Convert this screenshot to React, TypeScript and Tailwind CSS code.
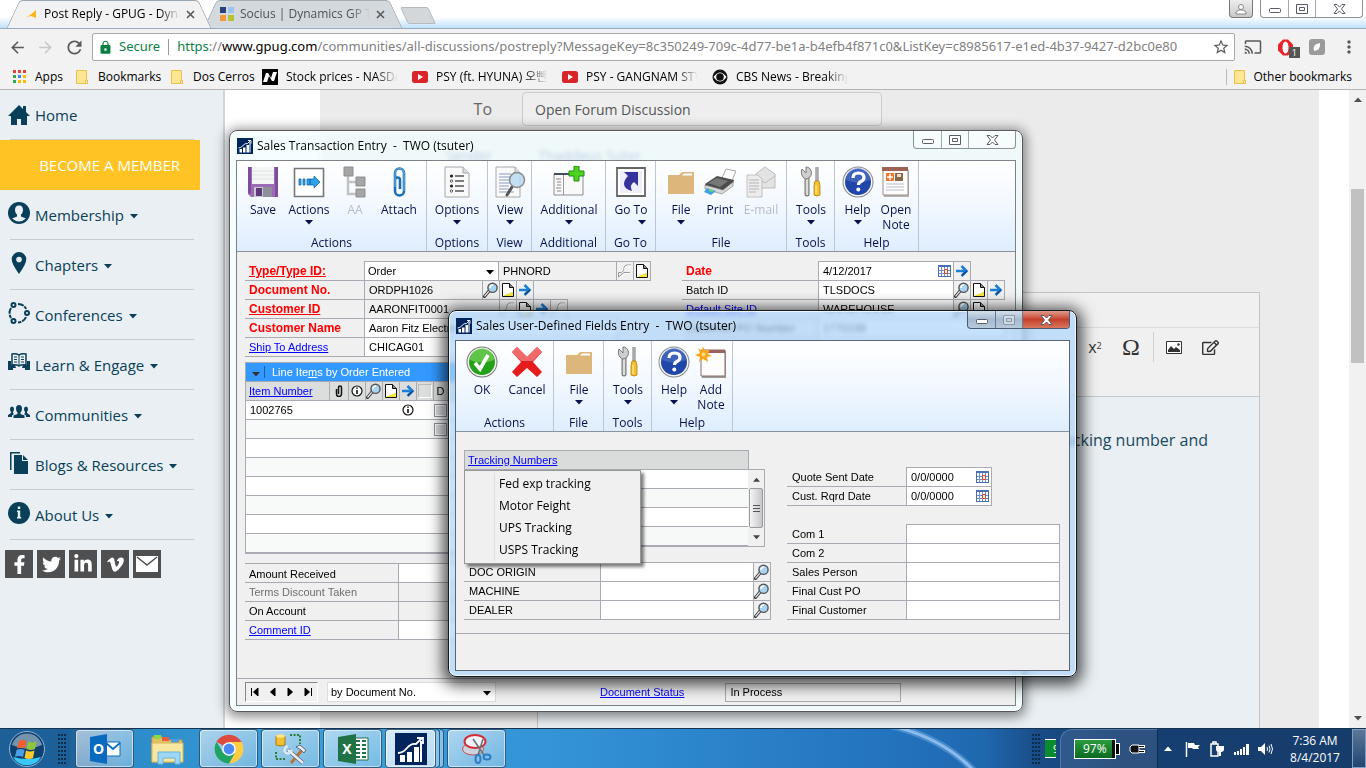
import React from 'react';
import clsx from 'clsx';
import { FaFacebookF, FaTwitter, FaLinkedinIn, FaVimeoV, FaRegEdit } from 'react-icons/fa';
import { MdCast, MdMoreVert, MdArrowBack, MdArrowForward, MdRefresh, MdLock, MdStarBorder } from 'react-icons/md';

type IconProps = { className?: string };
type Children = { children?: React.ReactNode };

/* ---------- small form icons ---------- */

const Magnifier = ({ className = '' }: IconProps) => (
  <svg viewBox="0 0 16 16" className={clsx('h-4 w-4', className)}>
    <path d="M6 9 1.5 14.5" stroke="#333" strokeWidth="3" strokeLinecap="round" />
    <path d="M6 9 1.8 14" stroke="#e8e8e8" strokeWidth="1.2" strokeLinecap="round" />
    <circle cx="9.5" cy="5.8" r="4.6" fill="#a8d4f4" stroke="#555" strokeWidth="1.4" />
    <path d="M7 6a3 3 0 0 1 3-3" stroke="#fff" strokeWidth="1.6" fill="none" />
  </svg>
);

const FadedMagnifier = () => (
  <svg viewBox="0 0 16 16" className="h-4 w-4">
    <path d="M1.500 14V9.500h3L7 7V4l2-2h5M1.500 14 7 9.500h6" stroke="#9a9a9a" fill="none" />
    <path d="M2.500 15 8 10.500h5M8 7V5l2-2h4" stroke="#fff" fill="none" />
  </svg>
);

const PageIcon = () => (
  <svg viewBox="0 0 16 16" className="h-4 w-4">
    <path d="M2.500 1.500h7l4 4v9h-11z" fill="#fff" stroke="#111" />
    <path d="M9.500 1.500v4h4" fill="#888" stroke="#111" />
    <path d="M4 13.500h9M6 12.500h7M9 11.500h4M11 10.500h2" stroke="#f2e540" />
  </svg>
);

const ArrowIcon = () => (
  <svg viewBox="0 0 16 16" className="h-4 w-4">
    <path d="M2 8h10M7.500 3l5 5-5 5" stroke="#1b7fd4" strokeWidth="2.600" fill="none" />
    <path d="M8 12.500 13 8" stroke="#123f7c" strokeWidth="1.200" />
  </svg>
);

const CalendarIcon = () => (
  <svg viewBox="0 0 13 12" className="h-3 w-[13px]">
    <path d="M0 0h13v12H0z" fill="#4a6fb5" />
    <path d="M1 2h11v9H1z" fill="#fff" />
    <path d="M1 5.500h11M1 8.500h11M3.500 2v9M6.500 2v9M9.500 2v9" stroke="#6f8fc8" />
    <path d="M6.500 4.500h3v4h-3z" fill="#fff" stroke="#e0452a" />
  </svg>
);

const InfoIcon = () => (
  <svg viewBox="0 0 12 12" className="h-3 w-3">
    <circle cx="6" cy="6" r="5" fill="#fff" stroke="#111" strokeWidth="1.200" />
    <path d="M6 5v4M6 2.500v1.300" stroke="#111" strokeWidth="1.600" />
  </svg>
);

const ClipIcon = () => (
  <svg viewBox="0 0 8 12" className="h-3 w-2">
    <path d="M1.500 4v5a2.500 2.500 0 0 0 5 0V2.500a1.500 1.500 0 0 0-3 0V9" fill="none" stroke="#111" strokeWidth="1.500" />
  </svg>
);

const GpLogo = ({ className = '' }: IconProps) => (
  <svg viewBox="0 0 32 32" className={className}>
    <path d="M0 0h32v32H0z" fill="#02245c" />
    <path d="M5 29h5v-7H5zM12 29h5V19h-5zM19 29h5V14h-5zM25 29h2V8h-2z" fill="#fff" />
    <path d="M3 20q5 0 9-5t9-4l6-6" fill="none" stroke="#fff" strokeWidth="1.800" />
    <path d="M22 5h6v6" fill="none" stroke="#fff" strokeWidth="1.800" />
  </svg>
);

/* ---------- ribbon icons, all on a 32 grid ---------- */

const Svg32 = ({ children }: Children) => (
  <svg viewBox="0 0 32 32" className="h-8 w-8">{children}</svg>
);

const SaveIcon = () => (
  <Svg32>
    <path d="M1 1h30v30H4l-3-3z" fill="#9b6bb8" />
    <path d="M1 1h3v27l-3-1zM28 1h3v30h-3z" fill="#7d4c9b" />
    <path d="M5 1h22v17H5z" fill="#f4f6f6" />
    <path d="M5 5h22M5 9h22M5 13h22" stroke="#dde5e3" />
    <path d="M7 21h18v10H7z" fill="#c9c9cf" />
    <path d="M9 22h6v8H9z" fill="#5c3a78" />
    <path d="M16 21h9v10h-9z" fill="#90909c" />
  </Svg32>
);

const ActionsIcon = () => (
  <Svg32>
    <path d="M1.500 2.500h29v28h-29z" fill="#fff" stroke="#777" strokeWidth="1.600" />
    <path d="M6 13h2v6H6zM10 13h2v6h-2zM14 13h3v6h-3zM17 13h4v-3l6 6-6 6v-3h-4z" fill="#2ea3ea" stroke="#1467ad" strokeWidth=".8" />
  </Svg32>
);

const TreeIcon = () => (
  <Svg32>
    <path d="M9 9v19h11M9 16h11" fill="none" stroke="#c2c2c2" strokeWidth="2.500" />
    <path d="M5 1h9v9H5zM17 11h9v9h-9zM17 23h9v8h-9z" fill="#a5a5a5" stroke="#8d8d8d" />
  </Svg32>
);

const AttachIcon = () => (
  <Svg32>
    <path d="M12 21V7a4.500 4.500 0 0 1 9 0v18a4.500 4.500 0 0 1-9 0V14a2.500 2.500 0 0 1 5 0v9" fill="none" stroke="#1c6fb4" strokeWidth="2.600" />
    <path d="M12 21V7a4.500 4.500 0 0 1 9 0v18" fill="none" stroke="#6fb9ee" strokeWidth="1" />
  </Svg32>
);

const OptionsIcon = () => (
  <Svg32>
    <path d="M4 1h18l6 6v24H4z" fill="#f9f9f9" stroke="#a8a8a8" />
    <path d="M22 1v6h6" fill="#ddd" stroke="#a8a8a8" />
    <path d="M14 10h9M14 15h9M14 20h9M14 25h9" stroke="#555" strokeWidth="1.300" />
    <circle cx="10.500" cy="10" r="1.600" fill="#222" /><circle cx="10.500" cy="20" r="1.600" fill="#222" />
    <circle cx="10.500" cy="15" r="1.200" fill="#fff" stroke="#555" /><circle cx="10.500" cy="25" r="1.200" fill="#fff" stroke="#555" />
  </Svg32>
);

const ViewIcon = () => (
  <Svg32>
    <path d="M2 1h19l5 6v24H2z" fill="#fafafa" stroke="#a8a8a8" />
    <path d="M21 1v6h5" fill="#ddd" stroke="#a8a8a8" />
    <path d="M5 8h12M5 11h12M5 14h12M5 17h11M5 20h10M5 23h10M5 26h15" stroke="#8b9bc4" />
    <path d="m18 21-5 8" stroke="#555" strokeWidth="3" strokeLinecap="round" />
    <circle cx="23" cy="14" r="7.500" fill="#b7d9f2" fillOpacity=".85" stroke="#8b8b8b" strokeWidth="1.500" />
  </Svg32>
);

const AdditionalIcon = () => (
  <Svg32>
    <path d="M1 8h29v21H1z" fill="#f8f8f8" stroke="#8d8d8d" />
    <path d="M1 7h20v2H1z" fill="#444e63" />
    <path d="M10.500 9v20" stroke="#999" />
    <path d="M3 13h5M4 16h4M4 19h4M3 22h5M4 25h4" stroke="#888" />
    <path d="M21 0h5v5h5v5h-5v5h-5v-5h-5V5h5z" fill="#4cd41f" stroke="#1f8a10" />
  </Svg32>
);

const GoToIcon = () => (
  <Svg32>
    <path d="M2 2h28v28H2z" fill="#fff" stroke="#666" strokeWidth="1.800" />
    <path d="M5 5h22v22H5z" fill="#eeeefb" />
    <path d="M9 6h14v14l-4-4q-5 3-2 9-8-2-8-7 0-4 4-8z" fill="#35339b" />
  </Svg32>
);

const FolderIcon = () => (
  <Svg32>
    <path d="M3 9h11l3-3h12v22H3z" fill="#dcb67a" />
    <path d="M17 9.500 19 7.500h8v2z" fill="#fff" />
  </Svg32>
);

const PrintIcon = () => (
  <Svg32>
    <path d="M17 14 22 3l10 2-5 12z" fill="#fff" stroke="#aaa" />
    <path d="m1 18 12-8 17 4-1 4-10 8L2 21z" fill="#4c4c4c" />
    <path d="m4 17 9-5 11 3-8 6z" fill="#777" />
    <path d="M1 19v4l17 5 11-8v-4l-10 8z" fill="#d9d9d9" stroke="#777" strokeWidth=".6" />
    <path d="m3 22 9 3-5 4-7-3z" fill="#3da4dd" />
    <path d="m5 24 4 1" stroke="#7fd06c" strokeWidth="2" />
  </Svg32>
);

const EmailIcon = () => (
  <Svg32>
    <path d="M11 8 20 1l10 7v14H11z" fill="#e3e3e3" stroke="#bbb" />
    <path d="m11 10 9 7 10-7" fill="none" stroke="#bbb" />
    <path d="M2 9h11l4 4v18H2z" fill="#ececec" stroke="#c0c0c0" />
    <path d="M4 14h10M4 17h10M4 20h10M4 23h10M4 26h7" stroke="#b5b5b5" />
  </Svg32>
);

const ToolsIcon = () => (
  <Svg32>
    <path d="M12 13v15" stroke="#777" strokeWidth="5" strokeLinecap="round" />
    <path d="M12 13v15" stroke="#dcdcdc" strokeWidth="2.600" strokeLinecap="round" />
    <path d="M7 3 11 7V1c5 0 7 6 4 10l-3 2C8 13 5 8 7 3z" fill="#cfcfcf" stroke="#777" />
    <path d="M22 1v14" stroke="#777" strokeWidth="3" />
    <path d="M22 1v14" stroke="#ddd" />
    <path d="M20 15h4l1 5v9q-3 2-6 0v-9z" fill="#f7c12c" stroke="#b87a08" strokeWidth=".8" />
    <path d="M21 19v9" stroke="#fff2b0" />
  </Svg32>
);

const HelpIcon = () => (
  <Svg32>
    <circle cx="16" cy="16" r="15.500" fill="#8a8a8a" />
    <circle cx="16" cy="16" r="14.500" fill="#f5f5f5" />
    <circle cx="16" cy="16" r="13" fill="#1f46a8" />
    <path d="M4 14a12 12 0 0 1 24 0q-12 5-24 0z" fill="#5577cc" opacity=".6" />
    <path d="M11 12q0-5 5.500-5t5.500 4.500q0 2.500-3 4-2.500 1-2.500 3.500" fill="none" stroke="#fff" strokeWidth="3.200" />
    <circle cx="16.300" cy="23.500" r="2" fill="#fff" />
  </Svg32>
);

const OpenNoteIcon = () => (
  <Svg32>
    <path d="M4 5h25v26H4z" fill="#b5b5b5" />
    <path d="M3 3h25v26H3z" fill="#fdfdfd" stroke="#9a8c88" />
    <path d="M2 1h26v4H2z" fill="#9c6252" />
    <path d="M6 7h8v8H6z" fill="#f0772b" />
    <path d="M10 8v6M7 11h6" stroke="#fff" strokeWidth="1.600" />
    <path d="M15 7h8v8h-8z" fill="#8a6747" />
    <path d="M17 8h4v3h-4z" fill="#f4e0c6" />
    <path d="M6 18h18M6 21h18M6 24h18" stroke="#b8bccb" />
  </Svg32>
);

const OkIcon = () => (
  <Svg32>
    <circle cx="16" cy="16" r="15.500" fill="#777" />
    <circle cx="16" cy="16" r="14.500" fill="#f4f4f4" />
    <circle cx="16" cy="16" r="13" fill="#22a016" />
    <path d="M4 14a12 12 0 0 1 24 0q-12 5-24 0z" fill="#8bdc6c" opacity=".6" />
    <path d="m9 17 5 6 8-14" fill="none" stroke="#fff" strokeWidth="3.600" />
  </Svg32>
);

const CancelIcon = () => (
  <Svg32>
    <path d="m6 1 10 10L26 1l5 5-9 10 9 10-5 5-10-9-10 9-5-5 9-10L1 6z" fill="#e51c1c" />
    <path d="m6 1 10 10L26 1l5 5-9 9H10L1 6z" fill="#f06a6a" />
  </Svg32>
);

const AddNoteIcon = () => (
  <Svg32>
    <path d="M7 5h24v27H7z" fill="#9b9b9b" />
    <path d="M6 4h24v26H6z" fill="#fdfdfd" stroke="#8a6a66" />
    <path d="M12 4h18v3H12z" fill="#9c6262" />
    <path d="m8 0 2 5 5-2-2 5 4 2-5 1 1 5-5-3-4 3 1-5-5-2 5-2-2-5 4 3z" fill="#f9a51a" />
    <circle cx="8.500" cy="8.500" r="2" fill="#ffe17a" />
  </Svg32>
);

/* ---------- window chrome ---------- */

function WindowControls({ dark = false, className = '' }: { dark?: boolean; className?: string }) {
  const base = 'flex items-center justify-center h-full';
  return (
    <div
      className={clsx(
        'flex h-[18px] w-[103px] overflow-hidden rounded-b border border-t-0',
        dark ? 'border-[#4a5a70] bg-linear-to-b from-[#d5e0ec] via-[#a5bace] to-[#b8cadc]' : 'border-[#8a9296] bg-white/40',
        className,
      )}
    >
      <button aria-label="Minimize" className={clsx(base, 'w-7 border-r', dark ? 'border-[#6a7a90]' : 'border-[#a3abaf]')}>
        <svg viewBox="0 0 12 5" className="mt-1 h-[5px] w-3"><rect x=".5" y=".5" width="11" height="4" rx="1" fill="#fff" stroke="#585c66" /></svg>
      </button>
      <button aria-label="Restore" className={clsx(base, 'w-[27px] border-r', dark ? 'border-[#6a7a90]' : 'border-[#a3abaf]')}>
        <svg viewBox="0 0 12 10" className={clsx('h-[10px] w-3', dark && 'opacity-40')}>
          <path d="M.5.5h11v9H.5z" fill="#fff" stroke="#585c66" />
          <path d="M3.500 3.500h5v3h-5z" fill="#fff" stroke="#585c66" />
        </svg>
      </button>
      <button
        aria-label="Close"
        className={clsx(base, 'flex-1', dark && 'bg-linear-to-b from-[#e09a8c] via-[#c4402a] to-[#d8765c]')}
      >
        <svg viewBox="0 0 13 10" className="h-[10px] w-[13px]">
          <path d="M1 .5h3l2.500 2.500L9 .5h3L8.500 5 12 9.500H9L6.500 7 4 9.500H1L4.500 5z" fill="#fff" stroke="#585c66" />
        </svg>
      </button>
    </div>
  );
}

type RibbonItem = { label: string; icon: React.FC; width: string; menu?: boolean; menuRight?: boolean; disabled?: boolean };
type RibbonGroupData = { caption: string; className: string; items: RibbonItem[] };

const DownTriangle = ({ className = '' }: IconProps) => (
  <svg viewBox="0 0 8 5" className={clsx('h-[5px] w-2', className)}><path d="M0 0h8L4 4.500z" fill="currentColor" /></svg>
);

function Ribbon({ groups }: { groups: RibbonGroupData[] }) {
  return (
    <div className="flex h-[91px] border-b border-[#8d939c] bg-linear-to-b from-white via-[#f2f8ff] to-[#deedfd] text-xs text-[#07104e]">
      {groups.map((group) => (
        <div key={group.caption} className={clsx('flex flex-none flex-col justify-between border-r border-[#bcc6d2]', group.className)}>
          <div className="flex px-[3px] pt-[5px]">
            {group.items.map((item) => (
              <button
                key={item.label}
                disabled={item.disabled}
                className={clsx('flex flex-none flex-col items-center', item.width, item.disabled && 'text-[#b9bcc2]')}
              >
                <item.icon />
                <span className="mt-1 text-center leading-[15px]">{item.label}</span>
                {item.menu && <DownTriangle className={clsx('mt-[3px]', item.menuRight && 'mr-[7px] self-end')} />}
              </button>
            ))}
          </div>
          <div className="pb-px text-center leading-[15px]">{group.caption}</div>
        </div>
      ))}
    </div>
  );
}

const mainRibbon: RibbonGroupData[] = [
  {
    caption: 'Actions',
    className: 'w-[190px]',
    items: [
      { label: 'Save', icon: SaveIcon, width: 'w-[46px]' },
      { label: 'Actions', icon: ActionsIcon, width: 'w-[46px]', menu: true },
      { label: 'AA', icon: TreeIcon, width: 'w-[46px]', disabled: true },
      { label: 'Attach', icon: AttachIcon, width: 'w-[42px]' },
    ],
  },
  { caption: 'Options', className: 'w-[61px]', items: [{ label: 'Options', icon: OptionsIcon, width: 'w-[54px]', menu: true }] },
  { caption: 'View', className: 'w-11', items: [{ label: 'View', icon: ViewIcon, width: 'w-[38px]', menu: true }] },
  { caption: 'Additional', className: 'w-[74px]', items: [{ label: 'Additional', icon: AdditionalIcon, width: 'w-[68px]', menu: true }] },
  { caption: 'Go To', className: 'w-[50px]', items: [{ label: 'Go To', icon: GoToIcon, width: 'w-[44px]', menu: true, menuRight: true }] },
  {
    caption: 'File',
    className: 'w-[131px]',
    items: [
      { label: 'File', icon: FolderIcon, width: 'w-11', menu: true },
      { label: 'Print', icon: PrintIcon, width: 'w-[34px]' },
      { label: 'E-mail', icon: EmailIcon, width: 'w-12', disabled: true },
    ],
  },
  { caption: 'Tools', className: 'w-12', items: [{ label: 'Tools', icon: ToolsIcon, width: 'w-[42px]', menu: true }] },
  {
    caption: 'Help',
    className: 'w-[84px]',
    items: [
      { label: 'Help', icon: HelpIcon, width: 'w-[39px]', menu: true },
      { label: 'Open Note', icon: OpenNoteIcon, width: 'w-[38px]' },
    ],
  },
];

const dialogRibbon: RibbonGroupData[] = [
  {
    caption: 'Actions',
    className: 'w-[98px]',
    items: [
      { label: 'OK', icon: OkIcon, width: 'w-[46px]' },
      { label: 'Cancel', icon: CancelIcon, width: 'w-[44px]' },
    ],
  },
  { caption: 'File', className: 'w-[50px]', items: [{ label: 'File', icon: FolderIcon, width: 'w-[44px]', menu: true }] },
  { caption: 'Tools', className: 'w-12', items: [{ label: 'Tools', icon: ToolsIcon, width: 'w-[42px]', menu: true }] },
  {
    caption: 'Help',
    className: 'w-[81px]',
    items: [
      { label: 'Help', icon: HelpIcon, width: 'w-[38px]', menu: true },
      { label: 'Add Note', icon: AddNoteIcon, width: 'w-[36px]' },
    ],
  },
];

/* ---------- form pieces ---------- */

// Cells overlap by one pixel so that neighbours share a single border line.
const cell = 'h-5 flex-none border border-[#a9aab2]';

function FieldRow({ id, label, labelClass, children }: Children & { id: string; label: string; labelClass: string }) {
  return (
    <div className="-mt-px flex">
      <label htmlFor={id} className={clsx('h-5 flex-none truncate border-b border-[#a9aab2] pl-1 leading-[21px]', labelClass)}>{label}</label>
      {children}
    </div>
  );
}

function TextCell({ id, value = '', className }: { id: string; value?: string; className: string }) {
  return <input id={id} defaultValue={value} className={clsx(cell, 'min-w-0 px-1 text-black outline-none', className)} />;
}

function IconCell({ label, children }: Children & { label: string }) {
  return (
    <button aria-label={label} className={clsx(cell, '-ml-px flex w-[18px] items-center justify-center')}>{children}</button>
  );
}

function DateCell({ id, value, className }: { id: string; value: string; className: string }) {
  return (
    <div className={clsx(cell, 'flex items-center bg-white pr-[2px]', className)}>
      <input id={id} defaultValue={value} className="min-w-0 flex-1 px-1 outline-none" />
      <button aria-label={`Pick date for ${id}`}><CalendarIcon /></button>
    </div>
  );
}

const required = 'w-[119px] text-xs font-bold text-[#f00]';
const linkText = 'text-[#00f] underline';

function SalesTransactionWindow() {
  return (
    <section className="absolute left-[229px] top-[130px] w-[794px] rounded-lg border border-[#55595c] bg-[#f1fefe]/75 px-[6px] pb-[5px] shadow-[0_2px_12px_3px_rgba(0,0,0,0.45),inset_0_0_0_1px_#fff] backdrop-blur-[2px]">
      <header className="flex h-[29px] items-center gap-1 pl-px text-xs">
        <GpLogo className="h-4 w-4" />
        <h2 className="whitespace-pre">Sales Transaction Entry  -  TWO (tsuter)</h2>
        <WindowControls className="ml-auto self-start" />
      </header>
      <div className="border border-[#7b8086] bg-[#f0f0f0] font-[Liberation_Sans,Arial,sans-serif] text-[11px]">
        <div className="font-[Open_Sans,sans-serif]"><Ribbon groups={mainRibbon} /></div>
        <div className="flex pl-2 pt-[10px]">
          <div className="w-[437px] flex-none">
            <FieldRow id="type" label="Type/Type ID:" labelClass={clsx(required, 'underline')}>
              <div className={clsx(cell, 'relative w-[135px] bg-white')}>
                <select id="type" className="h-full w-full appearance-none px-[3px] outline-none"><option>Order</option></select>
                <DownTriangle className="pointer-events-none absolute right-1 top-2" />
              </div>
              <TextCell id="type-id" value="PHNORD" className="-ml-px w-[119px]" />
              <IconCell label="Look up type"><FadedMagnifier /></IconCell>
              <IconCell label="Type note"><PageIcon /></IconCell>
            </FieldRow>
            <FieldRow id="document-no" label="Document No." labelClass={required}>
              <TextCell id="document-no" value="ORDPH1026" className="w-[119px]" />
              <IconCell label="Look up document"><Magnifier /></IconCell>
              <IconCell label="Document note"><PageIcon /></IconCell>
              <IconCell label="Open document"><ArrowIcon /></IconCell>
            </FieldRow>
            <FieldRow id="customer-id" label="Customer ID" labelClass={clsx(required, 'underline')}>
              <TextCell id="customer-id" value="AARONFIT0001" className="w-[136px]" />
              <IconCell label="Look up customer"><FadedMagnifier /></IconCell>
              <IconCell label="Customer note"><PageIcon /></IconCell>
              <IconCell label="Open customer"><ArrowIcon /></IconCell>
              <IconCell label="Customer credit"><FadedMagnifier /></IconCell>
            </FieldRow>
            <FieldRow id="customer-name" label="Customer Name" labelClass={required}>
              <TextCell id="customer-name" value="Aaron Fitz Electrical" className="w-[254px] bg-white" />
            </FieldRow>
            <FieldRow id="ship-to" label="Ship To Address" labelClass={clsx('w-[119px]', linkText)}>
              <TextCell id="ship-to" value="CHICAG01" className="w-[254px] bg-white" />
            </FieldRow>
          </div>
          <div>
            <FieldRow id="date" label="Date" labelClass="w-[136px] text-xs font-bold text-[#f00]">
              <DateCell id="date" value="4/12/2017" className="w-[136px]" />
              <IconCell label="Expand date"><ArrowIcon /></IconCell>
            </FieldRow>
            <FieldRow id="batch" label="Batch ID" labelClass="w-[136px]">
              <TextCell id="batch" value="TLSDOCS" className="w-[136px] bg-white" />
              <IconCell label="Look up batch"><Magnifier /></IconCell>
              <IconCell label="Batch note"><PageIcon /></IconCell>
              <IconCell label="Open batch"><ArrowIcon /></IconCell>
            </FieldRow>
            <FieldRow id="site" label="Default Site ID" labelClass={clsx('w-[136px]', linkText)}>
              <TextCell id="site" value="WAREHOUSE" className="w-[136px] bg-white" />
              <IconCell label="Look up site"><Magnifier /></IconCell>
              <IconCell label="Site note"><PageIcon /></IconCell>
            </FieldRow>
            <FieldRow id="po" label="Customer PO Number" labelClass="w-[136px]">
              <TextCell id="po" value="1770198" className="w-[187px] bg-white" />
            </FieldRow>
          </div>
        </div>

        <div className="mx-2 mt-[5px] border border-[#a9aab2]">
          <div className="flex h-[18px] items-center bg-[#3399ff] text-white">
            <DownTriangle className="ml-[6px] mt-1 text-[#333]" />
            <span className="ml-1 h-3 border-l border-[#1c5fa8] pl-[7px] leading-[13px]">Line Ite<u>m</u>s by Order Entered</span>
          </div>
          <table className="w-full table-fixed border-collapse">
            <thead>
              <tr className="h-[19px] bg-[#dcdddd] [&>th]:border-y [&>th]:border-r [&>th]:border-[#a9aab2] [&>th]:p-0 [&>th]:font-normal">
                <th className="w-[83px] text-left"><a href="#item" className={clsx('pl-[3px]', linkText)}>Item Number</a></th>
                <th className="w-[19px]"><span className="flex justify-center"><ClipIcon /></span></th>
                <th className="w-[17px]"><span className="flex justify-center"><InfoIcon /></span></th>
                <th className="w-[17px]"><span className="flex justify-center"><Magnifier /></span></th>
                <th className="w-[17px]"><span className="flex justify-center"><PageIcon /></span></th>
                <th className="w-[17px]"><span className="flex justify-center"><ArrowIcon /></span></th>
                <th className="w-[17px]"><span className="mx-auto block h-[14px] w-[14px] border border-b-white border-l-[#bbb] border-r-white border-t-[#bbb]" /></th>
                <th className="text-left"><span className="pl-[3px]">D</span></th>
              </tr>
            </thead>
            <tbody>
              {['1002765', '', '', '', '', '', '', ''].map((item, i) => (
                <tr key={i} className={clsx('h-[19px] border-b border-[#a9aab2]', i % 2 ? 'bg-[#f8fafa]' : 'bg-white')}>
                  <td className="p-0 pl-1">{item}</td>
                  <td colSpan={4} className="p-0" />
                  <td className="p-0">{item && <span className="flex justify-center"><InfoIcon /></span>}</td>
                  <td className="p-0" />
                  <td className="p-0">
                    {i < 2 && (
                      <input
                        type="checkbox"
                        aria-label={`Drop ship line ${i + 1}`}
                        className="ml-px block h-[13px] w-[13px] appearance-none border border-[#8f9295] bg-[#dcdfe2] shadow-[inset_0_0_0_1px_#fff]"
                      />
                    )}
                  </td>
                </tr>
              ))}
            </tbody>
          </table>
        </div>

        <div className="px-2 pt-[10px]">
          <FieldRow id="amount" label="Amount Received" labelClass="w-[153px] border-t">
            <TextCell id="amount" className="w-[120px] bg-white" />
          </FieldRow>
          <FieldRow id="terms" label="Terms Discount Taken" labelClass="w-[153px] text-[#6f6f6f]">
            <TextCell id="terms" className="w-[120px]" />
          </FieldRow>
          <FieldRow id="account" label="On Account" labelClass="w-[153px]">
            <TextCell id="account" className="w-[120px]" />
          </FieldRow>
          <FieldRow id="comment" label="Comment ID" labelClass={clsx('w-[153px]', linkText)}>
            <TextCell id="comment" className="w-[120px] bg-white" />
          </FieldRow>
        </div>

        <footer className="mt-[38px] flex h-[27px] items-center border-t border-[#a9aab2] px-2">
          <div className="flex h-5 w-[73px] items-center justify-around border border-b-white border-l-[#888] border-r-white border-t-[#888]">
            {['M1.500 1v8M8 1v8L3.500 5z', 'M7 1v8L2.500 5z', 'M3 1v8L7.500 5z', 'M8.500 1v8M2 1v8L6.500 5z'].map((d, i) => (
              <button key={d} aria-label={['First record', 'Previous record', 'Next record', 'Last record'][i]}>
                <svg viewBox="0 0 10 10" className="h-[10px] w-[10px]"><path d={d} stroke="#000" /></svg>
              </button>
            ))}
          </div>
          <div className="relative ml-[9px] h-5 w-[169px] border border-[#dcdde0] bg-white">
            <select aria-label="Sort by" className="h-full w-full appearance-none px-[3px] outline-none"><option>by Document No.</option></select>
            <DownTriangle className="pointer-events-none absolute right-1 top-2" />
          </div>
          <a href="#status" className={clsx('ml-[104px]', linkText)}>Document Status</a>
          <input aria-label="Document Status" readOnly value="In Process" className="ml-[41px] h-[19px] w-[176px] border border-[#a9aab2] px-1 outline-none" />
        </footer>
      </div>
    </section>
  );
}

function UserDefinedFieldsDialog() {
  return (
    <section className="absolute left-[448px] top-[310px] w-[629px] rounded-lg border border-[#101820] bg-[#aed4fa]/70 px-[6px] pb-[5px] shadow-[0_3px_15px_5px_rgba(0,0,0,0.7),inset_0_0_0_1px_rgba(255,255,255,0.75)] backdrop-blur-[2px]">
      <header className="flex h-[29px] items-center gap-1 pl-px text-xs">
        <GpLogo className="h-4 w-4" />
        <h2 className="whitespace-pre">Sales User-Defined Fields Entry  -  TWO (tsuter)</h2>
        <WindowControls dark className="ml-auto self-start" />
      </header>
      <div className="border border-[#5b6670] bg-[#f0f0f0] font-[Liberation_Sans,Arial,sans-serif] text-[11px]">
        <div className="font-[Open_Sans,sans-serif]"><Ribbon groups={dialogRibbon} /></div>
        <div className="flex gap-4 px-2 pb-[13px] pt-[18px]">
          <div className="w-[307px]">
            <div className="flex h-5 w-[285px] items-center border border-[#a9aab2] bg-[#dadcdb] pl-[3px]">
              <a href="#tracking" className={linkText}>Tracking Numbers</a>
            </div>
            <div className="relative -mt-px flex h-[78px] w-[301px] border border-[#a9aab2] bg-white">
              <ul className="flex-1">
                {[0, 1, 2, 3].map((i) => (
                  <li key={i} className={clsx('h-[19px] border-b border-[#a9aab2]', i % 2 === 1 && 'bg-[#f7f9f9]')} />
                ))}
              </ul>
              <div className="flex w-4 flex-col items-center justify-between bg-[#f0f0f0] text-[#444]">
                <button aria-label="Scroll up" className="flex h-[18px] w-full items-center justify-center"><DownTriangle className="h-1 w-[7px] rotate-180" /></button>
                <div className="flex w-[14px] flex-1 flex-col items-center justify-center gap-[2px] rounded-xs border border-[#9a9a9a] bg-linear-to-r from-[#f5f5f5] to-[#c5c6c9]">
                  <i className="h-px w-[7px] bg-[#555]" />
                  <i className="h-px w-[7px] bg-[#555]" />
                  <i className="h-px w-[7px] bg-[#555]" />
                </div>
                <button aria-label="Scroll down" className="flex h-[18px] w-full items-center justify-center"><DownTriangle className="h-1 w-[7px]" /></button>
              </div>
              <div role="menu" className="absolute -left-px top-0 w-[177px] border border-[#979797] bg-[#f0f0f0] py-[2px] pl-[29px] font-[Open_Sans,sans-serif] text-xs shadow-[3px_3px_3px_rgba(0,0,0,0.5)]">
                <div className="flex flex-col border-l border-[#dfdfdf]">
                  {['Fed exp tracking', 'Motor Feight', 'UPS Tracking', 'USPS Tracking'].map((item) => (
                    <button key={item} role="menuitem" className="h-[22px] pl-1 text-left">{item}</button>
                  ))}
                </div>
              </div>
            </div>
            <div className="mt-4">
              {['DOC ORIGIN', 'MACHINE', 'DEALER'].map((name) => (
                <FieldRow key={name} id={name} label={name} labelClass="w-[136px] pl-[5px]">
                  <TextCell id={name} className="w-[154px] bg-white" />
                  <IconCell label={`Look up ${name}`}><Magnifier /></IconCell>
                </FieldRow>
              ))}
            </div>
          </div>
          <div className="flex-1 pt-[18px]">
            {['Quote Sent Date', 'Cust. Rqrd Date'].map((name) => (
              <FieldRow key={name} id={name} label={name} labelClass="w-[119px] pl-[5px]">
                <DateCell id={name} value="0/0/0000" className="w-[86px]" />
              </FieldRow>
            ))}
            <div className="mt-[19px]">
              {['Com 1', 'Com 2', 'Sales Person', 'Final Cust PO', 'Final Customer'].map((name) => (
                <FieldRow key={name} id={name} label={name} labelClass="w-[119px] pl-[5px]">
                  <TextCell id={name} className="w-[154px] bg-white" />
                </FieldRow>
              ))}
            </div>
          </div>
        </div>
        <div className="h-[37px] border-t border-[#a9aab2]" />
      </div>
    </section>
  );
}

/* ---------- browser ---------- */

function BrowserTab({ title, icon, active = false }: { title: string; icon: React.ReactNode; active?: boolean }) {
  const fill = active ? 'bg-[#f2f2f2] border-[#9aa5ae]' : 'bg-[#d3d9dd] border-[#a3adb5]';
  return (
    <div className={clsx('relative flex h-7 flex-none items-center pl-[17px] text-xs', active ? 'z-10 w-[206px] pr-[17px]' : '-ml-[9px] w-[199px] pr-[17px] text-[#4d5357]')}>
      <span className={clsx('absolute inset-y-0 left-[7px] w-1/2 origin-center -skew-x-[25deg] rounded-tl border-l border-t', fill)} />
      <span className={clsx('absolute inset-y-0 right-[7px] w-1/2 origin-center skew-x-[25deg] rounded-tr border-r border-t', fill)} />
      <span className="relative flex-none">{icon}</span>
      <span className="relative ml-[6px] flex-1 overflow-hidden whitespace-nowrap [mask-image:linear-gradient(to_right,black_85%,transparent)]">{title}</span>
      <button aria-label={`Close ${title}`} className="relative ml-[6px]">
        <svg viewBox="0 0 9 9" className="h-[9px] w-[9px]"><path d="m1 1 7 7M8 1 1 8" stroke="#5a5a5a" strokeWidth="1.600" /></svg>
      </button>
    </div>
  );
}

const YellowFolder = () => (
  <svg viewBox="0 0 12 14" className="h-[14px] w-3">
    <path d="M.5.5h10v9l1 1v3H.5z" fill="#ffe692" stroke="#e8c04a" />
    <path d="M9.500 10.500h2v3h-2z" fill="#fff3c4" stroke="#e8c04a" />
  </svg>
);

const YouTubeIcon = () => (
  <svg viewBox="0 0 16 12" className="h-3 w-4">
    <rect width="16" height="12" rx="2.500" fill="#d9252a" />
    <path d="M6 3v6l5-3z" fill="#fff" />
  </svg>
);

const AppsIcon = () => (
  <svg viewBox="0 0 13 13" className="h-[13px] w-[13px]">
    {['#ea4335', '#ea4335', '#ea4335', '#34a853', '#4285f4', '#fbbc05', '#34a853', '#fbbc05', '#fbbc05'].map((fill, i) => (
      <rect key={i} x={(i % 3) * 5} y={Math.floor(i / 3) * 5} width="3" height="3" fill={fill} />
    ))}
  </svg>
);

const NasdaqIcon = () => (
  <svg viewBox="0 0 16 16" className="h-4 w-4">
    <path d="M0 0h16v16H0z" fill="#050505" />
    <path d="m1 13 3-9h2l3 5 2-6h4l-3 9h-2L7 7l-2 6z" fill="#fff" />
  </svg>
);

const CbsIcon = () => (
  <svg viewBox="0 0 16 16" className="h-4 w-4">
    <circle cx="8" cy="8" r="7.500" fill="#111" />
    <path d="M1.500 8Q8-1 14.500 8 8 17 1.500 8z" fill="#fff" />
    <circle cx="8" cy="8" r="3.800" fill="#111" />
  </svg>
);

const bookmarks = [
  { label: 'Apps', icon: <AppsIcon />, className: 'w-[63px]' },
  { label: 'Bookmarks', icon: <YellowFolder />, className: 'w-[95px]' },
  { label: 'Dos Cerros', icon: <YellowFolder />, className: 'w-[93px]' },
  { label: 'Stock prices - NASDAQ', icon: <NasdaqIcon />, className: 'w-[150px]', fade: true },
  { label: 'PSY (ft. HYUNA) 오빤 강', icon: <YouTubeIcon />, className: 'w-[150px]', fade: true },
  { label: 'PSY - GANGNAM STYLE', icon: <YouTubeIcon />, className: 'w-[150px]', fade: true },
  { label: 'CBS News - Breaking', icon: <CbsIcon />, className: 'w-[150px]', fade: true },
];

function BrowserHeader() {
  return (
    <header className="flex-none">
      <div className="relative flex h-[29px] border-b border-[#93aac0] bg-linear-to-b from-white from-60% to-[#bfe0fb] pl-[6px]">
        <BrowserTab
          active
          title="Post Reply - GPUG - Dynamics"
          icon={<svg viewBox="0 0 15 9" className="h-[9px] w-[15px]"><path d="M0 8q6-1 13-8v8l-5-2z" fill="#fdb515" /></svg>}
        />
        <BrowserTab
          title="Socius | Dynamics GP Tips"
          icon={
            <svg viewBox="0 0 14 14" className="h-[14px] w-[14px]">
              <path d="M0 0h6v6H0z" fill="#26437c" /><path d="M8 0h6v6H8z" fill="#9cc4ee" />
              <path d="M0 8h6v6H0z" fill="#f29a3a" /><path d="M8 8h6v6H8z" fill="#b4c431" />
            </svg>
          }
        />
        <button aria-label="New tab" className="ml-[2px] mt-[7px] h-[17px] w-[28px] skew-x-[25deg] rounded-xs border border-[#b5babd] bg-[#d3d7d9]" />
        <button aria-label="Profile" className="ml-auto mr-[7px] flex h-[18px] w-6 items-center justify-center rounded-b border border-t-0 border-[#777] bg-linear-to-b from-[#eee] to-[#c9c9c9]">
          <svg viewBox="0 0 12 12" className="h-3 w-3"><path d="M1 11V9l3-2h4l3 2v2zM3.500 4a2.500 2.500 0 1 1 5 0 2.500 2.500 0 0 1-5 0z" fill="#fff" stroke="#888" /></svg>
        </button>
        <WindowControls className="mr-[3px]" />
      </div>
      <div className="border-b border-[#b6b4b6] bg-[#f2f2f2]">
        <div className="flex h-9 items-center pl-2 pr-[7px] text-[#5a5a5a]">
          <button aria-label="Back" className="mr-[9px]"><MdArrowBack size={19} /></button>
          <button aria-label="Forward" className="mr-[9px] text-[#c9c9c9]"><MdArrowForward size={19} /></button>
          <button aria-label="Reload" className="mr-[7px]"><MdRefresh size={21} /></button>
          <div className="flex h-7 min-w-0 flex-1 items-center rounded-xs border border-[#a9a9a9] bg-white pl-[5px] pr-1 font-[Noto_Sans,sans-serif] text-[13px]">
            <MdLock size={15} className="flex-none text-[#0b8043]" />
            <span className="ml-[6px] text-[#0b8043]">Secure</span>
            <span className="mx-2 h-4 border-l border-[#999]" />
            <div className="min-w-0 flex-1 overflow-hidden whitespace-nowrap text-[#808080]">
              <span className="text-[#0b8043]">https</span>://<span className="text-black">www.gpug.com</span>/communities/all-discussions/postreply?MessageKey=8c350249-709c-4d77-be1a-b4efb4f871c0&amp;ListKey=c8985617-e1ed-4b37-9427-d2bc0e80
            </div>
            <button aria-label="Bookmark this page" className="ml-1"><MdStarBorder size={18} /></button>
          </div>
          <div className="flex items-center">
            <MdCast size={18} className="ml-[9px]" />
            <span className="relative ml-[15px] mr-[14px]">
              <svg viewBox="0 0 17 17" className="h-[17px] w-[17px]">
                <path d="M6 .5h5l5 5v6l-5 5H6l-5-5v-6z" fill="#e8262a" />
                <ellipse cx="8.500" cy="8.500" rx="3" ry="6" fill="#fff" />
              </svg>
              <span className="absolute -right-[6px] top-2 bg-[#555] px-[3px] text-[9px] leading-[11px] text-white">1</span>
            </span>
            <svg viewBox="0 0 16 16" className="ml-px h-4 w-4">
              <rect width="16" height="16" rx="3" fill="#9b9b9b" />
              <path d="M5 12q-2-7 6-8 1 7-6 8z" fill="#fff" />
            </svg>
            <button aria-label="Menu" className="ml-[14px]"><MdMoreVert size={20} /></button>
          </div>
        </div>
        <nav className="flex h-[24px] items-center pb-px pl-[11px] pr-[14px] text-xs text-black">
          {bookmarks.map((b) => (
            <a key={b.label} href="#bookmark" className={clsx('flex flex-none items-center gap-2', b.className)}>
              <span className="flex w-4 flex-none justify-center">{b.icon}</span>
              <span className={clsx('overflow-hidden whitespace-nowrap', b.fade && 'w-[112px] [mask-image:linear-gradient(to_right,black_80%,transparent)]')}>{b.label}</span>
            </a>
          ))}
          <a href="#other" className="ml-auto flex items-center gap-[7px] border-l border-[#bbb] pl-[7px]"><YellowFolder />Other bookmarks</a>
        </nav>
      </div>
    </header>
  );
}

/* ---------- site sidebar ---------- */

const Svg22 = ({ children }: Children) => (
  <svg viewBox="0 0 22 22" className="h-[22px] w-[22px]" fill="currentColor">{children}</svg>
);

const navItems = [
  { label: 'Membership', icon: <Svg22><circle cx="11" cy="11" r="11" /><path d="M11 3.500c3 0 4 2 4 4.500 0 2-1 3.500-2 4.500v2l5 2q-7 6-14 0l5-2v-2c-1-1-2-2.500-2-4.500 0-2.500 1-4.500 4-4.500z" fill="#e9eff3" /></Svg22> },
  { label: 'Chapters', icon: <Svg22><path d="M11 0a7.300 7.300 0 0 1 7.300 7.300Q18.300 12 11 22 3.700 12 3.700 7.300A7.300 7.300 0 0 1 11 0z" /><circle cx="11" cy="7.500" r="2.800" fill="#e9eff3" /></Svg22> },
  {
    label: 'Conferences',
    icon: (
      <Svg22>
        <g fill="none" stroke="currentColor" strokeWidth="2">
          <circle cx="5.500" cy="3" r="2" /><circle cx="19" cy="11" r="2" /><circle cx="5.500" cy="19" r="2" />
          <path d="M10 2q6 0 8 5M18 15q-2 5-8 5.500M3 6q-3 5 0 10" strokeDasharray="6 1" />
        </g>
      </Svg22>
    ),
  },
  {
    label: 'Learn & Engage',
    icon: (
      <Svg22>
        <path d="M4 2q4-1 7 1 3-2 7-1v11q-4-1-7 1-3-2-7-1z" fill="none" stroke="currentColor" strokeWidth="1.500" />
        <path d="M11 3v11M6 5h3M6 7.500h3M6 10h3M13 5h3M13 7.500h3M13 10h3" stroke="currentColor" />
        <path d="M0 9h3v4h4l1 3H5v2H0zM22 9h-3v4h-4l-1 3h3v2h5z" />
      </Svg22>
    ),
  },
  {
    label: 'Communities',
    icon: (
      <Svg22>
        <path d="M8 6.500a3 3.500 0 0 1 6 0q0 3-1.500 4v1.500l4 1.500V16h-11v-2.500l4-1.500v-1.500Q8 9.500 8 6.500z" />
        <path d="M2 7a2 2.500 0 0 1 4 0q0 2-1 3v1l1 1-2 1.500V15H0v-2l3-2v-1Q2 9 2 7zM20 7a2 2.500 0 0 0-4 0q0 2 1 3v1l-1 1 2 1.500V15h4v-2l-3-2v-1q1-1 1-3z" />
      </Svg22>
    ),
  },
  { label: 'Blogs & Resources', icon: <Svg22><path d="M2 18V0h10v1.500H3.500V18zM6 3h8v6h6v13H6zM15 3l5 5h-5z" /></Svg22> },
  { label: 'About Us', icon: <Svg22><circle cx="11" cy="11" r="11" /><path d="M9.800 4.500h2.400V7H9.800zM9 8.500h3.200V15h1v1.500H9V15h.8v-5H9z" fill="#e9eff3" /></Svg22> },
];

function SiteSidebar() {
  const divider = <hr className="ml-[10px] w-[184px] border-[#c8cccf]" />;
  return (
    <aside className="w-[225px] flex-none border-r-2 border-[#cfd5d9] bg-[#e9eff3] text-[#0a3f59]">
      <nav className="text-[15px]">
        <a href="#home" className="flex h-[49px] items-center gap-[5px] pl-2">
          <Svg22><path d="m11 1 4 4V2h3v6l4 4h-3v9h-6v-6H9v6H3v-9H0z" /></Svg22>
          <span className="pt-px">Home</span>
        </a>
        {divider}
        <a href="#join" className="flex h-[50px] w-[200px] items-center justify-end bg-[#ffc423] pr-5 text-white">BECOME A MEMBER</a>
        {navItems.map((item) => (
          <div key={item.label}>
            <a href="#section" className="flex h-[49px] items-center gap-[5px] pl-2">
              <span className="flex w-[22px] flex-none items-center pb-[3px]">{item.icon}</span>
              <span className="pt-px">{item.label}</span>
              <DownTriangle className="ml-px mt-1" />
            </a>
            {divider}
          </div>
        ))}
      </nav>
      <div className="mt-[10px] flex gap-1 pl-[5px] text-white [&>a]:flex [&>a]:h-7 [&>a]:w-7 [&>a]:items-center [&>a]:justify-center [&>a]:bg-[#4d4f51]">
        <a href="#facebook" aria-label="Facebook"><FaFacebookF size={19} /></a>
        <a href="#twitter" aria-label="Twitter"><FaTwitter size={19} /></a>
        <a href="#linkedin" aria-label="LinkedIn"><FaLinkedinIn size={20} /></a>
        <a href="#vimeo" aria-label="Vimeo"><FaVimeoV size={19} /></a>
        <a href="#mail" aria-label="Email">
          <svg viewBox="0 0 22 16" className="h-4 w-[22px]"><path d="M0 0h22v16H0z" fill="#fff" /><path d="m1 1 10 8L21 1" fill="none" stroke="#4d4f51" strokeWidth="1.500" /></svg>
        </a>
      </div>
    </aside>
  );
}

function PageContent() {
  return (
    <main className="flex min-w-0 flex-1 bg-white pl-[95px]">
      <div className="min-w-0 flex-1 bg-[#ebebeb] text-[#666]">
        <div className="flex items-center pt-[2px]">
          <label htmlFor="to" className="w-[172px] text-right text-base">To</label>
          <input id="to" readOnly value="Open Forum Discussion" className="ml-[30px] h-[34px] w-[360px] rounded-sm border border-[#ccc] bg-[#eee] px-3 text-sm text-[#555] outline-none" />
        </div>
        <div className="mt-5 flex items-center text-sm text-[#22409c]">
          <span className="w-[172px] text-right">Sender</span>
          <span className="ml-[46px]">Thaddeus Suter</span>
        </div>
        <div className="ml-[217px] mr-[59px] mt-[126px] border border-[#c4c4c8] bg-[#f0f0f0]">
          <div className="h-[35px] border-b border-[#dcdcdc]" />
          <div className="flex h-[69px] justify-end border-b border-[#c8c8c8] pr-10 pt-1 text-[#333]">
            <div className="flex h-[30px] items-center">
              <button aria-label="Superscript" className="w-9 text-base">x<sup className="text-[9px]">2</sup></button>
              <button aria-label="Symbols" className="mr-1 w-9 font-[Liberation_Serif,serif] text-2xl">Ω</button>
              <span className="h-[30px] border-l border-[#d0d0d0]" />
              <button aria-label="Image" className="ml-3">
                <svg viewBox="0 0 16 13" className="h-[13px] w-4">
                  <path d="M.5.5h15v12H.5z" fill="#fff" stroke="#333" />
                  <path d="M2 11V9l3-4 3 3 2-2 4 3v2z" fill="#333" /><circle cx="12.500" cy="3.500" r="1.200" fill="#333" />
                </svg>
              </button>
              <button aria-label="Edit" className="ml-5"><FaRegEdit size={17} /></button>
            </div>
          </div>
          <p className="h-[400px] bg-[#e9eff3] pr-[51px] pt-[31px] text-right text-base text-[#1b4a60]">tracking number and</p>
        </div>
      </div>
      <div className="w-[30px] flex-none" />
      <div className="flex w-[17px] flex-none flex-col items-center justify-between bg-[#f1f1f1] text-[#505050]">
        <DownTriangle className="my-[7px] rotate-180" />
        <div className="flex w-[13px] flex-1 flex-col pt-[80px]"><div className="h-[174px] bg-[#c1c1c1]" /></div>
        <DownTriangle className="my-[7px]" />
      </div>
    </main>
  );
}

/* ---------- taskbar ---------- */

const StartOrb = () => (
  <svg viewBox="0 0 36 36" className="h-9 w-9">
    <circle cx="18" cy="18" r="17.500" fill="#0f3f6d" stroke="#8fb7d8" />
    <path d="M4 26a16 16 0 0 0 28 0q-14 4-28 0z" fill="#38c8f5" />
    <path d="M3 14a15.500 15.500 0 0 1 30 0q-15 7-30 0z" fill="#8fa9bd" opacity=".8" />
    <path d="M10 10q4-2 7.500 0l-1.500 7.500q-4-2-8 0z" fill="#f0602c" />
    <path d="M19 10.500q4 2 8.500 0L26 18q-4 2-8.500 0z" fill="#8cc63e" />
    <path d="M7.500 19q4-2 8 0L14 26q-4-2-8 0z" fill="#4a9fe8" />
    <path d="M17 19.500q4 2 8.500 0L24 27q-4 2-8.500 0z" fill="#fdc92f" />
  </svg>
);

const OutlookIcon = () => (
  <svg viewBox="0 0 32 32" className="h-8 w-8">
    <path d="M16 9h15v14H16z" fill="#fff" stroke="#0d6fc2" />
    <path d="m17 10 7 6 7-6" fill="none" stroke="#0d6fc2" strokeWidth="2" />
    <path d="M1 4 18 1v30L1 28z" fill="#0a6ac0" />
    <text x="9.500" y="21" fontSize="14" fontWeight="700" textAnchor="middle" fill="#fff">O</text>
  </svg>
);

const ExplorerIcon = () => (
  <svg viewBox="0 0 34 32" className="h-8 w-[34px]">
    <path d="M2 4h10l2 3h18v22H2z" fill="#e3c163" stroke="#c59c36" />
    <path d="M4 2h7v4H4z" fill="#8cd64a" /><path d="M12 4h7v4h-7z" fill="#e75c44" /><path d="M21 6h8v4h-8z" fill="#4f9fe0" />
    <path d="M2 10h31v19H2z" fill="#f8e7a0" stroke="#d9b759" />
    <path d="M8 31V19h22v12h-5v-6H13v6z" fill="#9ed7f5" stroke="#69b3dd" />
  </svg>
);

const ChromeIcon = () => (
  <svg viewBox="0 0 32 32" className="h-8 w-8">
    <path d="M16 16 3.500 8.800A14.500 14.500 0 0 1 28.600 9H16z" fill="#dd4b3e" />
    <path d="M28.600 9A14.500 14.500 0 0 1 16 30.500l6-11L16 9z" fill="#fecd42" />
    <path d="M3.500 8.800A14.500 14.500 0 0 0 16 30.500l6.100-11-6.100 3.500-6-3.500z" fill="#1fa463" />
    <circle cx="16" cy="16" r="6.800" fill="#fff" /><circle cx="16" cy="16" r="5.400" fill="#4a8af4" />
  </svg>
);

const SqlToolsIcon = () => (
  <svg viewBox="0 0 32 32" className="h-8 w-8">
    <path d="M1 3v9q4 2 9 0V3z" fill="#f2bf2e" stroke="#a97b12" /><ellipse cx="5.500" cy="3" rx="4.500" ry="1.800" fill="#ffe489" />
    <path d="M15 2h10v9M1 19v7h10" fill="none" stroke="#2b7d33" strokeWidth="2" strokeDasharray="2 1.500" />
    <path d="m16 30 11-13" stroke="#b8742c" strokeWidth="3" /><path d="m21 14 4-2 6 5-2 3-3-3z" fill="#e5ebf2" stroke="#5d6b7d" />
    <path d="m13 17 15 13" stroke="#5d6b7d" strokeWidth="4" /><path d="m13 17 15 13" stroke="#e9eef5" strokeWidth="2.500" />
    <circle cx="13" cy="17" r="3.500" fill="none" stroke="#dfe6ee" strokeWidth="2.500" strokeDasharray="16 5" />
  </svg>
);

const ExcelIcon = () => (
  <svg viewBox="0 0 32 32" className="h-8 w-8">
    <path d="M16 5h15v22H16z" fill="#fff" stroke="#1f7346" />
    <path d="M19 8h4M25 8h4M19 12h4M25 12h4M19 16h4M25 16h4M19 20h4M25 20h4M19 24h4M25 24h4" stroke="#1f7346" strokeWidth="2.200" />
    <path d="M1 4 19 1v30L1 28z" fill="#1f7346" />
    <text x="10" y="21" fontSize="14" fontWeight="700" textAnchor="middle" fill="#fff">X</text>
  </svg>
);

const SnipIcon = () => (
  <svg viewBox="0 0 32 32" className="h-8 w-8">
    <ellipse cx="12" cy="16" rx="10.500" ry="6" fill="#cdd3de" stroke="#c05050" />
    <ellipse cx="14" cy="8.500" rx="10.500" ry="6.500" fill="#f2f3f7" stroke="#d22f36" strokeWidth="2" />
    <path d="m12 6 11 16M22 6l-5 16" stroke="#6b7380" strokeWidth="1.600" />
    <ellipse cx="17" cy="26" rx="2.500" ry="4" fill="none" stroke="#2c7cc4" strokeWidth="2" />
    <ellipse cx="26" cy="24" rx="3.500" ry="2.500" fill="none" stroke="#2c7cc4" strokeWidth="2" />
  </svg>
);

const Grip = () => (
  <svg viewBox="0 0 8 30" className="h-[30px] w-2">
    {Array.from({ length: 24 }, (_, i) => (
      <rect key={i} x={(i % 3) * 3} y={Math.floor(i / 3) * 4} width="2" height="2" fill="#0d2d4d" />
    ))}
  </svg>
);

const TaskButton = ({ label, children, running = true, className = 'w-[59px]' }: Children & { label: string; running?: boolean; className?: string }) => (
  <button
    aria-label={label}
    className={clsx(
      'flex h-[39px] flex-none items-center justify-center rounded-sm',
      running && 'border border-[#153f66]/80 bg-linear-to-br from-white/60 to-white/30 shadow-[inset_0_0_0_1px_rgba(255,255,255,0.55)]',
      className,
    )}
  >
    {children}
  </button>
);

function Taskbar() {
  return (
    <footer className="relative z-20 flex h-10 flex-none items-center border-t border-[#17344f] bg-[linear-gradient(90deg,#1f5f98_0,#1d6099_5%,#2c8cc9_9%,#3a9fda_25%,#3494d6_40%,#2373bd_65%,#1f68b0_72%,#1a4c86_76%,#163f72_82%,#163c6a_100%)] text-xs text-white">
      <svg viewBox="0 0 120 39" className="absolute left-[880px] top-0 h-[39px] w-[120px]">
        <path d="M8-4q55 12 88 48" fill="none" stroke="#8fc4f5" strokeWidth="7" opacity=".35" />
        <path d="M8-4q55 12 88 48" fill="none" stroke="#b8dcff" strokeWidth="3" opacity=".6" />
      </svg>
      <button aria-label="Start" className="ml-[9px]"><StartOrb /></button>
      <span className="ml-[13px] mr-[9px]"><Grip /></span>
      <div className="flex gap-[3px]">
        <TaskButton label="Outlook"><OutlookIcon /></TaskButton>
        <TaskButton label="Explorer" running={false}><ExplorerIcon /></TaskButton>
        <TaskButton label="Chrome"><ChromeIcon /></TaskButton>
        <TaskButton label="SQL Tools"><SqlToolsIcon /></TaskButton>
        <TaskButton label="Excel"><ExcelIcon /></TaskButton>
        <div className="flex">
          <TaskButton label="Dynamics GP" className="w-[51px] bg-white/50"><GpLogo className="h-8 w-8" /></TaskButton>
          <i className="h-[39px] w-1 rounded-r-sm border border-l-0 border-[#153f66]/80 bg-white/40" />
          <i className="h-[39px] w-1 rounded-r-sm border border-l-0 border-[#153f66]/80 bg-white/40" />
        </div>
        <TaskButton label="Snipping Tool"><SnipIcon /></TaskButton>
      </div>
      <div className="ml-auto flex h-full items-center">
        <Grip />
        <span className="ml-[5px] h-[19px] w-[11px] overflow-hidden border-y border-white bg-[#0c8a30] pl-[8px] text-[11px] leading-[17px]">9</span>
        <div className="ml-1 flex h-full w-[98px] items-center rounded-tl-xl border-l border-t border-r border-[#4f7aa8] border-r-[#0e2c52] bg-white/10 pl-[13px]">
          <span className="flex h-5 w-[42px] items-center border border-white bg-linear-to-b from-[#2a9d3c] to-[#0b6a22] pl-2 pr-1 shadow-[inset_-3px_0_0_#111]">97%</span>
          <i className="h-3 w-1 border border-l-0 border-white bg-black" />
          <svg viewBox="0 0 16 12" className="ml-[9px] h-3 w-4">
            <path d="M3 2h7v8H3L1 8V4z" fill="#111" stroke="#fff" /><path d="M10 3.500h6M10 8.500h6" stroke="#fff" strokeWidth="3" /><path d="M10 3.500h5M10 8.500h5" stroke="#111" />
          </svg>
        </div>
        <button aria-label="Show hidden icons" className="ml-[6px]"><DownTriangle className="rotate-180" /></button>
        <svg viewBox="0 0 15 16" className="ml-[13px] h-4 w-[15px]"><path d="M1.500 1v15" stroke="#fff" strokeWidth="1.500" /><path d="M3 2h6l1 2h5l-2 2 1 2H8L7 7H3z" fill="#fff" /></svg>
        <svg viewBox="0 0 14 16" className="ml-[10px] h-4 w-[14px]">
          <path d="M1 3h7v12H1zM3 1h3v2H3z" fill="none" stroke="#fff" strokeWidth="1.500" /><path d="M6 5h8v3q0 3-3 3v4H9v-4q-3 0-3-3z" fill="#fff" />
        </svg>
        <svg viewBox="0 0 16 12" className="ml-[10px] h-3 w-4"><path d="M0 9h2v3H0zM3 8h2v4H3zM6 6h2v6H6zM9 4h2v8H9zM12 1h3v11h-3z" fill="#fff" /></svg>
        <svg viewBox="0 0 16 14" className="ml-2 h-[14px] w-4"><path d="M0 5h3l4-4v12L3 9H0z" fill="#fff" /><path d="M9 5q1 2 0 4M11 3.500q2 3.500 0 7M13 2q3 5 0 10" fill="none" stroke="#fff" /></svg>
        <div className="ml-[14px] w-[54px] text-center leading-[17px]">
          <div>7:36 AM</div>
          <div>8/4/2017</div>
        </div>
        <button aria-label="Show desktop" className="ml-[10px] h-full w-[14px] border border-[#7ba0c4] bg-linear-to-b from-white/30 to-white/5" />
      </div>
    </footer>
  );
}

export default function App() {
  return (
    <div className="relative flex h-screen flex-col overflow-hidden font-[Open_Sans,Noto_Sans_CJK_KR,sans-serif]">
      <BrowserHeader />
      <div className="flex min-h-0 flex-1 overflow-hidden">
        <SiteSidebar />
        <PageContent />
      </div>
      <SalesTransactionWindow />
      <UserDefinedFieldsDialog />
      <Taskbar />
    </div>
  );
}
